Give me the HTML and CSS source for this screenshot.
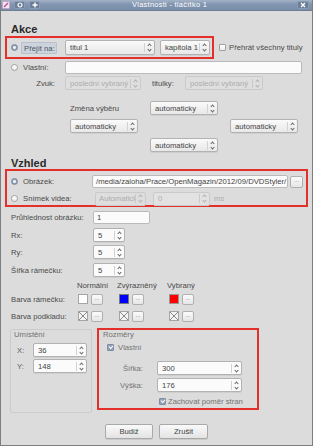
FILE: index.html
```html
<!DOCTYPE html>
<html lang="cs">
<head>
	<meta charset="UTF-8">
	<title>Vlastnosti - tlačítko 1</title>
	<link rel="stylesheet" href="styles.css">
</head>
<body>
<div class="window">
	<div class="titlebar">
		<div class="tb-left">
			<span class="appicon">
				<svg width="8" height="8" viewBox="0 0 8 8"><rect x="0.5" y="0.5" width="7" height="7" rx="1" fill="#f3e6f0" stroke="#c9a3c4"/><path d="M2 6 L6 2" stroke="#b0519a" stroke-width="1.4"/></svg>
			</span>
			<span class="tbtn"><svg width="6" height="6" viewBox="0 0 6 6"><circle cx="3" cy="3" r="2" fill="none" stroke="#fff" stroke-width="1.2"/></svg></span>
			<span class="tbtn"><svg width="6" height="6" viewBox="0 0 6 6"><path d="M3 0.5 V5.5 M0.5 3 H5.5" stroke="#fff" stroke-width="1.4"/></svg></span>
		</div>
		<div class="tb-title">Vlastnosti - tlačítko 1</div>
		<span class="tbtn close"><svg width="6" height="6" viewBox="0 0 6 6"><path d="M1 1 L5 5 M5 1 L1 5" stroke="#fff" stroke-width="1.4"/></svg></span>
	</div>

	<h2 class="heading akce">Akce</h2>

	<div class="row r-goto">
		<div class="mark mark-goto">
			<span class="radio on"></span>
			<span class="focus">Přejít na:</span>
			<div class="combo c-titul"><span class="val">titul 1</span><span class="arr"></span></div>
			<div class="combo c-kap"><span class="val">kapitola 1</span><span class="arr"></span></div>
		</div>
		<span class="check c-all"></span><span class="chk-label">Přehrát všechny tituly</span>
	</div>

	<div class="row r-own">
		<span class="radio"></span>
		<span class="lbl l-own">Vlastní:</span>
		<div class="field f-own"></div>
	</div>

	<div class="row r-sound">
		<span class="lbl right l-sound">Zvuk:</span>
		<div class="combo off c-sound"><span class="val">poslední vybraný</span><span class="arr"></span></div>
		<span class="lbl l-sub">titulky:</span>
		<div class="combo off c-sub"><span class="val">poslední vybraný</span><span class="arr"></span></div>
	</div>

	<div class="row r-change">
		<span class="lbl l-change">Změna výběru</span>
		<div class="combo c-auto"><span class="val">automaticky</span><span class="arr"></span></div>
	</div>

	<div class="row r-mid">
		<div class="combo c-auto c-left"><span class="val">automaticky</span><span class="arr"></span></div>
		<div class="combo c-auto c-right"><span class="val">automaticky</span><span class="arr"></span></div>
	</div>

	<div class="row r-down">
		<div class="combo c-auto c-down"><span class="val">automaticky</span><span class="arr"></span></div>
	</div>

	<h2 class="heading vzhled">Vzhled</h2>

	<div class="mark mark-look">
		<div class="row r-img">
			<span class="radio on"></span>
			<span class="lbl l-img">Obrázek:</span>
			<div class="field f-img">/media/zaloha/Prace/OpenMagazin/2012/09/DVDStyler/</div>
			<span class="dots d-img">...</span>
		</div>
		<div class="row r-video">
			<span class="radio"></span>
			<span class="lbl l-video">Snímek videa:</span>
			<div class="combo off c-video"><span class="val">Automaticky</span><span class="arr"></span></div>
			<div class="spin off s-ms"><span class="val">0</span><span class="arr"></span></div>
			<span class="lbl off-txt l-ms">ms</span>
		</div>
	</div>

	<div class="row r-form r-alpha">
		<span class="lbl l-form">Průhlednost obrázku:</span>
		<div class="field f-alpha">1</div>
	</div>
	<div class="row r-form r-rx">
		<span class="lbl l-form">Rx:</span>
		<div class="spin s-small"><span class="val">5</span><span class="arr"></span></div>
	</div>
	<div class="row r-form r-ry">
		<span class="lbl l-form">Ry:</span>
		<div class="spin s-small"><span class="val">5</span><span class="arr"></span></div>
	</div>
	<div class="row r-form r-bw">
		<span class="lbl l-form">Šířka rámečku:</span>
		<div class="spin s-small"><span class="val">5</span><span class="arr"></span></div>
	</div>

	<div class="row r-states">
		<span class="st st-normal">Normální</span>
		<span class="st st-hi">Zvýrazněný</span>
		<span class="st st-sel">Vybraný</span>
	</div>
	<div class="row r-colors">
		<span class="lbl l-color">Barva rámečku:</span>
		<span class="swatch white"></span><span class="dots">...</span>
		<span class="swatch blue g2"></span><span class="dots">...</span>
		<span class="swatch red g3"></span><span class="dots">...</span>
	</div>
	<div class="row r-colors r-bg">
		<span class="lbl l-color">Barva podkladu:</span>
		<span class="swatch none"></span><span class="dots">...</span>
		<span class="swatch none g2"></span><span class="dots">...</span>
		<span class="swatch none g3"></span><span class="dots">...</span>
	</div>

	<div class="bottom">
		<div class="group pos">
			<div class="legend">Umístění</div>
			<div class="row r-xy r-x">
				<span class="lbl l-xy">X:</span>
				<div class="spin s-xy"><span class="val">36</span><span class="arr"></span></div>
			</div>
			<div class="row r-xy r-y">
				<span class="lbl l-xy">Y:</span>
				<div class="spin s-xy"><span class="val">148</span><span class="arr"></span></div>
			</div>
		</div>
		<div class="mark mark-size">
			<div class="legend">Rozměry</div>
			<div class="row r-custom">
				<span class="check on"></span><span class="chk-label soft">Vlastní</span>
			</div>
			<div class="row r-wh r-w">
				<span class="lbl right soft l-wh">Šířka:</span>
				<div class="spin s-wh"><span class="val">300</span><span class="arr"></span></div>
			</div>
			<div class="row r-wh r-h">
				<span class="lbl right soft l-wh">Výška:</span>
				<div class="spin s-wh"><span class="val">176</span><span class="arr"></span></div>
			</div>
			<div class="row r-keep">
				<span class="check on"></span><span class="chk-label soft">Zachovat poměr stran</span>
			</div>
		</div>
	</div>

	<div class="row r-buttons">
		<span class="button b-ok">Budiž</span>
		<span class="button b-cancel">Zrušit</span>
	</div>
</div>
</body>
</html>
```

FILE: styles.css
```css
* {
	padding: 0;
	margin: 0;
	box-sizing: border-box;
}
body {
	background: #dcdcdc;
	font-family: "Liberation Sans", Arial, sans-serif;
	font-size: 7.7px;
	color: #4a4a4a;
}
.window {
	width: 313px;
	height: 446px;
	background: #dcdcdc;
	border: 1px solid #7e7e7e;
	border-top: 0;
	display: flex;
	flex-direction: column;
	overflow: hidden;
}

/* title bar */
.titlebar {
	height: 11px;
	flex-shrink: 0;
	display: flex;
	align-items: center;
	background: linear-gradient(#a4b3c7, #8396b1 40%, #7a8ea9);
	border-bottom: 1px solid #6c7d95;
}
.tb-left {
	display: flex;
	align-items: center;
}
.appicon {
	display: flex;
	margin-left: 1px;
}
.tbtn {
	display: flex;
	align-items: center;
	justify-content: center;
	width: 11px;
	height: 8px;
	margin-left: 4px;
	border-radius: 2px;
	background: #6b7e99;
	border: 1px solid #8a9bb3;
}
.tb-title {
	flex: 1;
	padding-left: 92px;
	color: #fff;
	font-size: 7.4px;
	letter-spacing: 0.3px;
	line-height: 10px;
}
.tbtn.close {
	margin-right: 3px;
	width: 12px;
}

/* generic */
.heading {
	font-size: 11px;
	font-weight: bold;
	color: #2a2a2a;
	margin-left: 10px;
	flex-shrink: 0;
}
.akce {
	margin-top: 12px;
	height: 13px;
	line-height: 13px;
}
.vzhled {
	margin-top: 5px;
	height: 12px;
	line-height: 12px;
}
.row {
	display: flex;
	align-items: center;
	height: 14px;
	flex-shrink: 0;
}
.lbl {
	white-space: nowrap;
	flex-shrink: 0;
}
.lbl.right {
	text-align: right;
}
.soft {
	color: #737373;
}
.mark {
	border: 2px solid #e3302a;
	flex-shrink: 0;
}

.radio {
	width: 7px;
	height: 7px;
	flex-shrink: 0;
	border-radius: 50%;
	border: 1px solid #a2a2a2;
	background: linear-gradient(#ffffff, #ececec);
}
.radio.on {
	border-color: #7d8aa0;
	background: radial-gradient(circle, #eef1f5 0, #eef1f5 1.2px, #8a9ab2 1.8px);
}
.check {
	position: relative;
	width: 7px;
	height: 7px;
	flex-shrink: 0;
	border: 1px solid #a0a0a0;
	border-radius: 1px;
	background: linear-gradient(#ffffff, #eeeeee);
}
.check.on {
	border-color: #7f8da4;
	background: #93a2b8;
}
.check.on::after {
	content: "";
	position: absolute;
	left: 1px;
	top: 0px;
	width: 3px;
	height: 2px;
	border-left: 1px solid #fff;
	border-bottom: 1px solid #fff;
	transform: rotate(-45deg);
}
.chk-label {
	margin-left: 3px;
	white-space: nowrap;
}

.field {
	height: 13px;
	flex-shrink: 0;
	background: #fbfbfb;
	border: 1px solid #bababa;
	border-radius: 2px;
	padding-left: 3px;
	line-height: 11px;
	white-space: nowrap;
	overflow: hidden;
	color: #444;
}

.combo, .spin {
	display: flex;
	align-items: center;
	height: 14px;
	flex-shrink: 0;
	border: 1px solid #b2b2b2;
	border-radius: 2px;
	background: linear-gradient(#fafafa, #e8e8e8);
	box-shadow: 0 1px 0 rgba(0, 0, 0, 0.06);
}
.spin {
	background: #fbfbfb;
}
.val {
	flex: 1;
	padding-left: 4px;
	white-space: nowrap;
	overflow: hidden;
	color: #444;
}
.arr {
	position: relative;
	width: 9px;
	height: 9px;
	flex-shrink: 0;
	margin-right: 1px;
	border-left: 1px solid #d2d2d2;
}
.arr::before, .arr::after {
	content: "";
	position: absolute;
	left: 3px;
	width: 2px;
	height: 2px;
	border-left: 1px solid #666;
	border-top: 1px solid #666;
}
.arr::before {
	top: 1px;
	transform: rotate(45deg);
}
.arr::after {
	bottom: 1px;
	transform: rotate(225deg);
}
.off {
	background: #dedede;
	border-color: #cacaca;
	box-shadow: none;
}
.off .val, .off-txt {
	color: #adadad;
}
.off .arr {
	border-left-color: #cacaca;
}
.off .arr::before, .off .arr::after {
	border-color: #b0b0b0;
}

.dots {
	width: 12px;
	height: 11px;
	flex-shrink: 0;
	margin-left: 3px;
	border: 1px solid #b0b0b0;
	border-radius: 2px;
	background: linear-gradient(#fbfbfb, #e6e6e6);
	font-size: 6px;
	line-height: 6px;
	text-align: center;
	color: #777;
}
.swatch {
	width: 10px;
	height: 10px;
	flex-shrink: 0;
	border: 1px solid #a5a5a5;
}
.white { background: #ffffff; }
.blue { background: #0000ff; border-color: #777; }
.red { background: #ff0000; border-color: #999; }
.none {
	background:
		linear-gradient(45deg, transparent 45%, #888 47%, #888 53%, transparent 55%),
		linear-gradient(-45deg, transparent 45%, #888 47%, #888 53%, transparent 55%),
		#f4f4f4;
}
.swatch.g2 { margin-left: 16px; }
.swatch.g3 { margin-left: 25px; }

.button {
	display: flex;
	align-items: center;
	justify-content: center;
	height: 15px;
	flex-shrink: 0;
	border: 1px solid #a9a9a9;
	border-radius: 2px;
	background: linear-gradient(#fafafa, #e3e3e3);
	box-shadow: 0 1px 0 rgba(0, 0, 0, 0.08);
	color: #444;
}

/* Akce */
.r-goto {
	height: 23px;
}
.mark-goto {
	display: flex;
	align-items: center;
	margin-left: 4px;
	width: 209px;
	height: 23px;
}
.mark-goto .radio {
	margin-left: 4px;
}
.focus {
	margin-left: 3px;
	width: 36px;
	height: 12px;
	padding-left: 2px;
	line-height: 11px;
	white-space: nowrap;
	background: #cdd3dd;
	border: 1px solid #b9c1cf;
	border-radius: 1px;
	color: #4a5468;
}
.c-titul {
	margin-left: 8px;
	width: 90px;
	height: 15px;
}
.c-kap {
	margin-left: 5px;
	width: 50px;
	height: 15px;
}
.c-all {
	margin-left: 5px;
}
.r-own {
	margin-top: 1px;
}
.r-own .radio {
	margin-left: 10px;
}
.l-own {
	margin-left: 5px;
	width: 42px;
}
.f-own {
	width: 237px;
}
.r-sound {
	margin-top: 2px;
}
.l-sound {
	width: 54px;
}
.c-sound {
	margin-left: 10px;
	width: 76px;
}
.l-sub {
	margin-left: 11px;
	width: 33px;
}
.c-sub {
	width: 78px;
}
.r-change {
	margin-top: 11px;
}
.l-change {
	margin-left: 69px;
	width: 80px;
}
.c-auto {
	width: 68px;
}
.r-mid {
	margin-top: 4px;
}
.c-left {
	margin-left: 69px;
}
.c-right {
	margin-left: 92px;
}
.r-down {
	margin-top: 5px;
}
.c-down {
	margin-left: 149px;
}

/* Vzhled */
.mark-look {
	margin-left: 4px;
	width: 303px;
	height: 38px;
	padding-top: 4px;
}
.mark-look .radio {
	margin-left: 4px;
}
.r-img {
	height: 13px;
}
.l-img {
	margin-left: 5px;
	width: 69px;
}
.f-img {
	width: 196px;
}
.d-img {
	margin-left: 2px;
	width: 13px;
	height: 12px;
}
.r-video {
	margin-top: 4px;
	height: 13px;
}
.l-video {
	margin-left: 5px;
	width: 72px;
}
.c-video {
	width: 51px;
}
.c-video .val {
	padding-left: 3px;
}
.s-ms {
	margin-left: 7px;
	width: 57px;
	background: #e2e2e2;
}
.l-ms {
	margin-left: 4px;
}
.l-form {
	margin-left: 10px;
	width: 82px;
}
.r-alpha {
	margin-top: 3px;
}
.f-alpha {
	width: 57px;
}
.r-rx {
	margin-top: 4px;
}
.r-ry {
	margin-top: 3px;
}
.r-bw {
	margin-top: 4px;
}
.s-small {
	width: 32px;
}
.r-states {
	margin-top: 2px;
	height: 12px;
}
.st {
	white-space: nowrap;
}
.st-normal {
	margin-left: 76px;
	width: 40px;
}
.st-hi {
	width: 50px;
}
.r-colors {
	margin-top: 2px;
	height: 12px;
}
.r-bg {
	margin-top: 5px;
}
.l-color {
	margin-left: 10px;
	width: 67px;
}

/* position and size */
.bottom {
	display: flex;
	align-items: flex-start;
	margin-top: 4px;
	height: 87px;
	flex-shrink: 0;
}
.group.pos {
	margin-left: 9px;
	margin-top: 3px;
	width: 82px;
	height: 84px;
	border: 1px solid #cccccc;
	border-radius: 2px;
}
.legend {
	height: 10px;
	line-height: 10px;
	padding-left: 3px;
	color: #707070;
}
.mark-size .legend {
	padding-left: 4px;
}
.r-x {
	margin-top: 3px;
}
.r-y {
	margin-top: 2px;
}
.l-xy {
	padding-left: 6px;
	width: 22px;
	color: #606060;
}
.s-xy {
	width: 54px;
}
.mark-size {
	margin-left: 5px;
	margin-top: 2px;
	width: 162px;
	height: 82px;
}
.r-custom {
	margin-top: 2px;
	height: 10px;
}
.r-custom .check {
	margin-left: 8px;
}
.r-custom .chk-label {
	margin-left: 4px;
}
.r-w {
	margin-top: 9px;
}
.r-h {
	margin-top: 3px;
}
.l-wh {
	width: 44px;
}
.s-wh {
	margin-left: 14px;
	width: 85px;
}
.r-keep {
	margin-top: 4px;
	height: 10px;
}
.r-keep .check {
	margin-left: 60px;
}
.r-keep .chk-label {
	margin-left: 2px;
}

.r-buttons {
	margin-top: 11px;
	height: 15px;
}
.b-ok {
	margin-left: 104px;
	width: 48px;
}
.b-cancel {
	margin-left: 6px;
	width: 49px;
}
```
